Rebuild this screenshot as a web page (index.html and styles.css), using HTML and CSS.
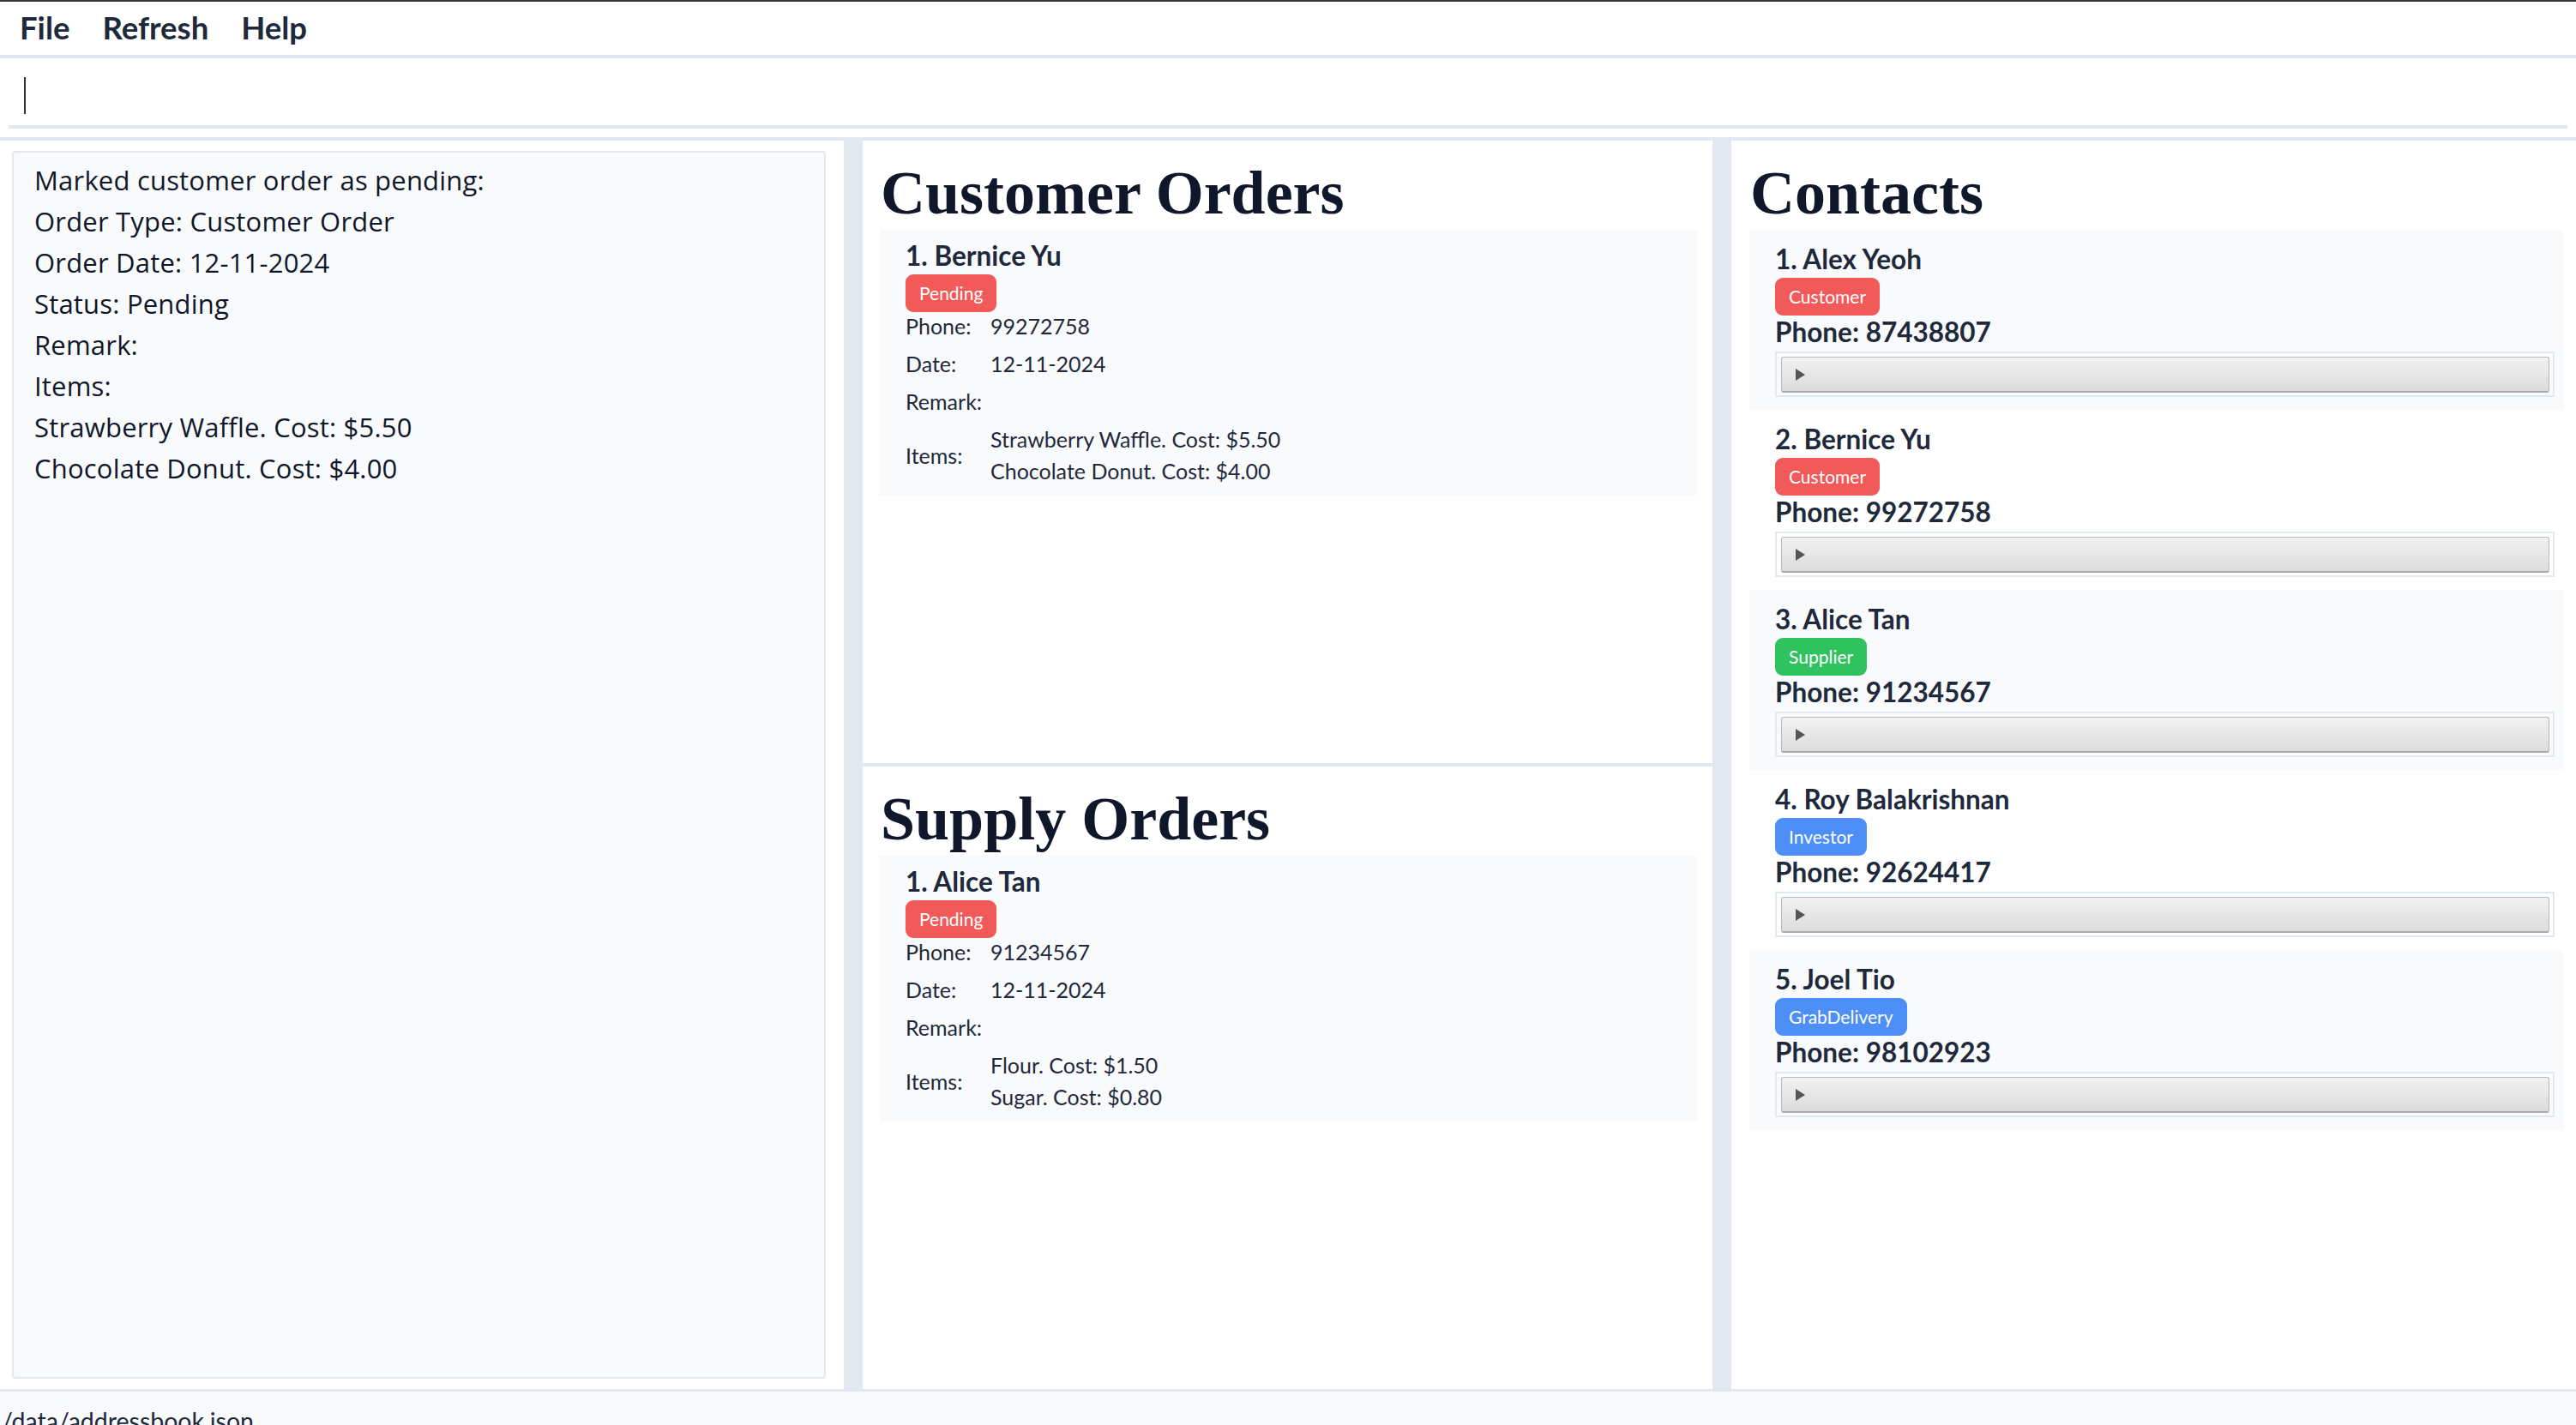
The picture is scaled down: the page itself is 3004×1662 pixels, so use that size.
FILE: index.html
```html
<!DOCTYPE html>
<html lang="en">
<head>
<meta charset="utf-8">
<title>Address Book</title>
<link rel="stylesheet" href="styles.css">
</head>
<body>
<div class="app">
  <nav class="menubar">
    <span class="menu-item">File</span>
    <span class="menu-item">Refresh</span>
    <span class="menu-item">Help</span>
  </nav>
  <div class="command">
    <div class="command-input"><span class="caret"></span></div>
  </div>
  <main class="main">
    <section class="col col-left">
      <div class="result">
        <p>Marked customer order as pending:</p>
        <p>Order Type: Customer Order</p>
        <p>Order Date: 12-11-2024</p>
        <p>Status: Pending</p>
        <p>Remark:</p>
        <p>Items:</p>
        <p>Strawberry Waffle. Cost: $5.50</p>
        <p>Chocolate Donut. Cost: $4.00</p>
      </div>
    </section>
    <section class="col col-mid">
      <div class="pane">
        <h1 class="title">Customer Orders</h1>
        <div class="order">
          <div class="name">1. Bernice Yu</div>
          <span class="badge red">Pending</span>
          <div class="fields">
            <span class="lbl">Phone:</span><span class="val">99272758</span>
            <span class="lbl">Date:</span><span class="val">12-11-2024</span>
            <span class="lbl">Remark:</span><span class="val"></span>
            <span class="lbl items-lbl">Items:</span>
            <span class="val items"><span>Strawberry Waffle. Cost: $5.50</span><span>Chocolate Donut. Cost: $4.00</span></span>
          </div>
        </div>
      </div>
      <div class="pane">
        <h1 class="title">Supply Orders</h1>
        <div class="order">
          <div class="name">1. Alice Tan</div>
          <span class="badge red">Pending</span>
          <div class="fields">
            <span class="lbl">Phone:</span><span class="val">91234567</span>
            <span class="lbl">Date:</span><span class="val">12-11-2024</span>
            <span class="lbl">Remark:</span><span class="val"></span>
            <span class="lbl items-lbl">Items:</span>
            <span class="val items"><span>Flour. Cost: $1.50</span><span>Sugar. Cost: $0.80</span></span>
          </div>
        </div>
      </div>
    </section>
    <section class="col col-right">
      <h1 class="title">Contacts</h1>
      <div class="contact shaded">
        <div class="name">1. Alex Yeoh</div>
        <span class="badge red">Customer</span>
        <div class="phone">Phone: 87438807</div>
        <div class="expander"><div class="exp-btn"><span class="tri"></span></div></div>
      </div>
      <div class="contact">
        <div class="name">2. Bernice Yu</div>
        <span class="badge red">Customer</span>
        <div class="phone">Phone: 99272758</div>
        <div class="expander"><div class="exp-btn"><span class="tri"></span></div></div>
      </div>
      <div class="contact shaded">
        <div class="name">3. Alice Tan</div>
        <span class="badge green">Supplier</span>
        <div class="phone">Phone: 91234567</div>
        <div class="expander"><div class="exp-btn"><span class="tri"></span></div></div>
      </div>
      <div class="contact">
        <div class="name">4. Roy Balakrishnan</div>
        <span class="badge blue">Investor</span>
        <div class="phone">Phone: 92624417</div>
        <div class="expander"><div class="exp-btn"><span class="tri"></span></div></div>
      </div>
      <div class="contact shaded">
        <div class="name">5. Joel Tio</div>
        <span class="badge blue">GrabDelivery</span>
        <div class="phone">Phone: 98102923</div>
        <div class="expander"><div class="exp-btn"><span class="tri"></span></div></div>
      </div>
    </section>
  </main>
  <footer class="status">/data/addressbook.json</footer>
</div>
</body>
</html>
```
FILE: styles.css
```css
* { box-sizing: border-box; }
html, body { margin: 0; padding: 0; }
body {
  font-family: Lato, "Noto Sans", sans-serif;
  color: #1e293b;
  background: #ffffff;
  width: 3004px;
  height: 1662px;
  overflow: hidden;
}
.app {
  display: flex;
  flex-direction: column;
  height: 1662px;
  border-top: 2px solid #3a3a3a;
}
.menubar {
  height: 66px;
  display: flex;
  align-items: center;
  padding: 0 0 2px 23px;
  gap: 38px;
  border-bottom: 4px solid #e2e8f0;
}
.menu-item {
  font-weight: 700;
  font-size: 36.5px;
  color: #1e293b;
}
.command {
  height: 96px;
  padding: 0 10px;
  border-bottom: 4px solid #e2e8f0;
}
.command-input {
  height: 82px;
  border-bottom: 4px solid #e2e8f0;
  padding: 22px 0 0 18px;
}
.caret {
  display: block;
  width: 2px;
  height: 43px;
  background: #333;
}
.main {
  flex: 1;
  display: grid;
  grid-template-columns: 984px 991px 1fr;
  column-gap: 22px;
  background: #e2e8f0;
  min-height: 0;
}
.col { background: #fff; min-height: 0; }
.col-left { padding: 12px 21px 12px 14px; }
.result {
  height: 100%;
  border: 2px solid #e2e8f0;
  background: #f8fafc;
  border-radius: 4px;
  padding: 8px 24px;
}
.result p {
  margin: 0;
  font-family: "Open Sans", Lato, sans-serif;
  font-size: 31px;
  line-height: 48px;
  color: #0f172a;
  letter-spacing: 0.2px;
}
.col-mid {
  display: flex;
  flex-direction: column;
  gap: 4px;
  background: #e2e8f0;
}
.pane {
  flex: 1;
  background: #fff;
  padding: 21px 18px 0 20px;
}
.title {
  margin: 0;
  font-family: "Liberation Serif", "DejaVu Serif", serif;
  font-weight: 700;
  font-size: 72px;
  line-height: 80px;
  color: #0f172a;
  padding-left: 1px;
}
.order {
  margin-top: 3px;
  background: #f8fafc;
  padding: 12px 30px 14px 30px;
}
.name {
  font-weight: 700;
  font-size: 31.5px;
  line-height: 36px;
  color: #1e293b;
}
.badge {
  display: inline-block;
  margin-top: 4px;
  height: 44px;
  line-height: 44px;
  padding: 0 16px;
  border-radius: 9px;
  color: #fff;
  font-size: 21px;
}
.red { background: #f25a5a; }
.green { background: #2fc25f; }
.blue { background: #4d8ff6; }
.fields {
  display: grid;
  grid-template-columns: 99px 1fr;
  row-gap: 14px;
  margin-top: 1px;
  font-size: 25px;
  line-height: 30px;
  color: #1e293b;
}
.lbl, .val { display: block; }
.items-lbl { align-self: center; }
.items { display: flex; flex-direction: column; gap: 7px; }
.col-right { padding: 21px 15px 0 21px; }
.col-right .title { padding-left: 1px; margin-bottom: 3px; }
.contact {
  height: 210px;
  padding: 16px 10px 14px 30px;
}
.contact.shaded { background: #f8fafc; }
.contact .badge { margin-top: 4px; }
.phone {
  margin-top: 1px;
  font-weight: 700;
  font-size: 31.5px;
  line-height: 36px;
  color: #1e293b;
}
.expander {
  margin-top: 5px;
  height: 53px;
  border: 2px solid #e2e8f0;
  padding: 4px 4px 3px 5px;
}
.exp-btn {
  height: 42px;
  border: 1px solid #b8b8b8;
  border-bottom: 2px solid #a9a9a9;
  border-radius: 3px;
  background: linear-gradient(#f2f2f2, #dcdcdc);
  display: flex;
  align-items: center;
  padding-left: 16px;
}
.tri {
  width: 0;
  height: 0;
  border-top: 7px solid transparent;
  border-bottom: 7px solid transparent;
  border-left: 11px solid #555;
}
.status {
  height: 42px;
  border-top: 3px solid #e2e8f0;
  background: #f8fafc;
  font-size: 28.5px;
  padding: 14px 0 0 2px;
  color: #1e293b;
  line-height: 40px;
  overflow: hidden;
}
```
